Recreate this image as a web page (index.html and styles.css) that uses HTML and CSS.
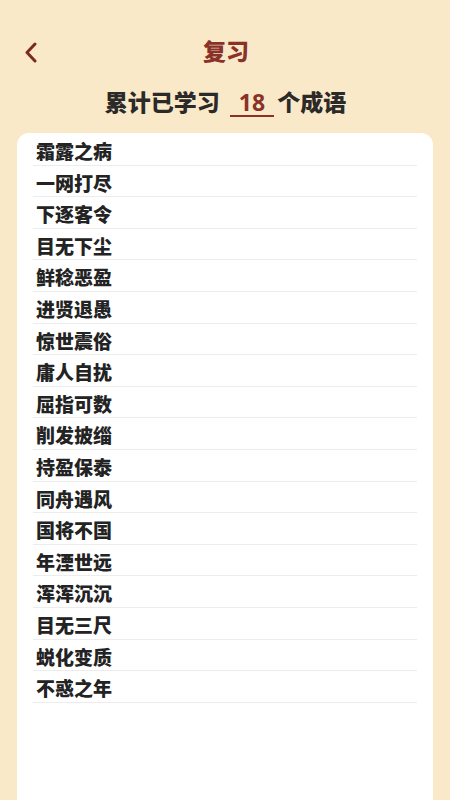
FILE: index.html
```html
<!DOCTYPE html>
<html lang="zh-CN">
<head>
<meta charset="utf-8">
<title>复习</title>
<link rel="stylesheet" href="styles.css">
</head>
<body>
<div class="page">
  <header class="topbar">
    <span class="back" aria-label="返回">
      <svg width="14" height="21" viewBox="0 0 14 21"><path d="M11 2 L3 10.5 L11 19" fill="none" stroke="#7c2a20" stroke-width="3" stroke-linecap="round" stroke-linejoin="round"/></svg>
    </span>
    <h1 class="title">复习</h1>
  </header>
  <div class="summary">累计已学习<span class="count">18</span>个成语</div>
  <main class="card">
    <ul class="list">
      <li class="row">霜露之病</li>
      <li class="row">一网打尽</li>
      <li class="row">下逐客令</li>
      <li class="row">目无下尘</li>
      <li class="row">鲜稔恶盈</li>
      <li class="row">进贤退愚</li>
      <li class="row">惊世震俗</li>
      <li class="row">庸人自扰</li>
      <li class="row">屈指可数</li>
      <li class="row">削发披缁</li>
      <li class="row">持盈保泰</li>
      <li class="row">同舟遇风</li>
      <li class="row">国将不国</li>
      <li class="row">年湮世远</li>
      <li class="row">浑浑沉沉</li>
      <li class="row">目无三尺</li>
      <li class="row">蜕化变质</li>
      <li class="row">不惑之年</li>
    </ul>
  </main>
</div>
</body>
</html>
```

FILE: styles.css
```css
* { box-sizing: border-box; }
html, body {
  margin: 0;
  padding: 0;
  height: 800px;
  overflow: hidden;
}
body {
  background: #f9e9c9;
  font-family: "Noto Sans CJK SC", "Noto Sans", sans-serif;
}
.page {
  display: flex;
  flex-direction: column;
  height: 800px;
  padding: 0 17px 0 17px;
}
.topbar {
  position: relative;
  height: 44px;
  margin-top: 30px;
  display: flex;
  align-items: center;
  justify-content: center;
}
.back {
  position: absolute;
  left: 7px;
  top: 12px;
  display: flex;
}
.title {
  margin: 0 0 4px 0;
  font-size: 23px;
  font-weight: 900;
  color: #8a3128;
  line-height: 40px;
  padding-left: 2px;
}
.summary {
  margin-top: 10px;
  height: 36px;
  line-height: 34px;
  text-align: center;
  font-size: 23px;
  font-weight: 900;
  color: #2b2a28;
  padding-left: 1px;
}
.count {
  display: inline-block;
  color: #8a3128;
  font-family: "Open Sans", "Noto Sans", sans-serif;
  font-weight: 700;
  margin: 0 3px 0 10px;
  padding: 0 9px;
  line-height: 25px;
  border-bottom: 2px solid #8a3128;
}
.card {
  margin-top: 13px;
  flex: 1;
  background: #ffffff;
  border-radius: 12px 12px 0 0;
  padding: 1px 16px 0 16px;
}
.list {
  list-style: none;
  margin: 0;
  padding: 0;
}
.row {
  height: 31.6px;
  padding: 2px 0 0 3px;
  line-height: 29px;
  font-size: 19px;
  font-weight: 900;
  color: #232323;
  border-bottom: 1.5px solid #ececec;
}
```
